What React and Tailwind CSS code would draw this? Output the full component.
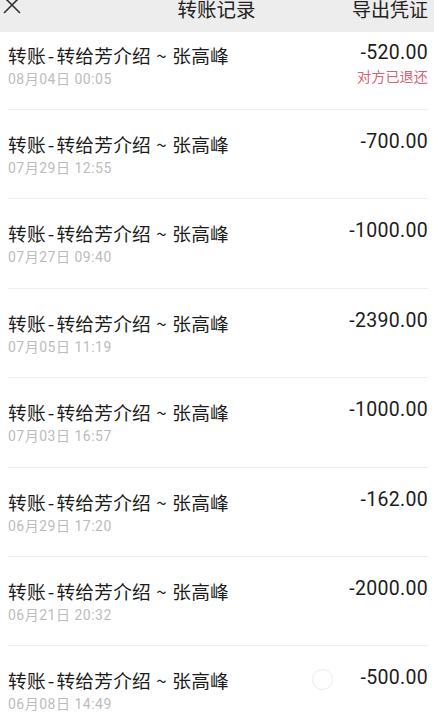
import React from 'react'

const records = [
    { date: '08月04日 00:05', amount: '-520.00', note: '对方已退还' },
    { date: '07月29日 12:55', amount: '-700.00' },
    { date: '07月27日 09:40', amount: '-1000.00' },
    { date: '07月05日 11:19', amount: '-2390.00' },
    { date: '07月03日 16:57', amount: '-1000.00' },
    { date: '06月29日 17:20', amount: '-162.00' },
    { date: '06月21日 20:32', amount: '-2000.00' },
    { date: '06月08日 14:49', amount: '-500.00', circle: true },
]

const font = { fontFamily: '"Noto Sans CJK SC", "Noto Sans", sans-serif' }
const numFont = { fontFamily: 'Roboto, "Noto Sans CJK SC", sans-serif' }

function Row({ item, first }) {
    return (
        <div className={`relative ml-2 mr-[6px] flex justify-between border-b border-[#efefef] ${first ? 'h-[78px] pt-[11px]' : 'h-[89.4px] pt-[22px]'}`}>
            <div className="flex flex-col">
                <p className="text-[18.7px] leading-[24px] text-[#1c1c1c] whitespace-nowrap tracking-[0.2px]">
                    转账<span className="mx-[2px]">-</span>转给芳介绍<span className="mx-[1px]"> ~ </span>张高峰
                </p>
                <p className="mt-[2px] text-[14px] leading-[20px] text-[#bcbcbc] tracking-[0.5px]" style={numFont}>{item.date}</p>
            </div>
            <div className="flex flex-col items-end">
                <p className="-mt-[2px] text-[19.5px] leading-[24px] text-[#1c1c1c] tracking-[0.3px]" style={numFont}>{item.amount}</p>
                {item.note && <p className="mt-[1px] text-[14.2px] leading-[20px] text-[#dc5f78]">{item.note}</p>}
            </div>
            {item.circle && (
                <div className="absolute left-[304px] top-[23px] h-[21px] w-[21px] rounded-full border border-[#ececec]" />
            )}
        </div>
    )
}

export default function App() {
    return (
        <div className="w-[434px] h-[715px] overflow-hidden bg-white" style={font}>
            {/* header, top part cut off */}
            <div className="h-8 bg-[#ededed] overflow-hidden">
                <div className="flex items-center justify-between pl-[3px] pr-[6px] h-[17px]">
                    <svg width="18" height="18" viewBox="0 0 18 18" className="-mt-[8px]">
                        <path d="M1 1 L17 17 M17 1 L1 17" stroke="#333" strokeWidth="1.6" fill="none" />
                    </svg>
                    <p className="pl-[60px] text-[19.5px] leading-[20px] text-[#222]">转账记录</p>
                    <p className="text-[19px] leading-[20px] text-[#222]">导出凭证</p>
                </div>
            </div>
            <div>
                {records.map((item, i) => (
                    <Row key={i} item={item} first={i === 0} />
                ))}
            </div>
        </div>
    )
}
